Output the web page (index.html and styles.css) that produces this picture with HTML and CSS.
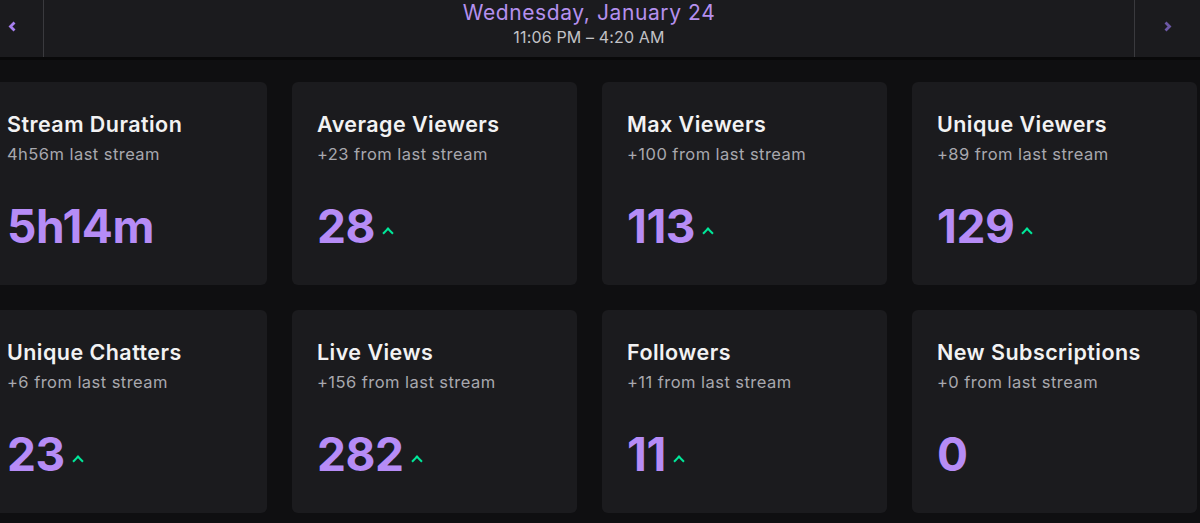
FILE: index.html
```html
<!DOCTYPE html>
<html lang="en">
<head>
    <meta charset="utf-8">
    <title>Stream Summary</title>
    <link rel="stylesheet" href="styles.css">
</head>
<body>
    <div class="page">
        <!-- Thanh chọn ngày -->
        <header class="day-bar">
            <button class="nav nav-prev" aria-label="Previous">
                <svg width="9" height="11" viewBox="0 0 9 11"><polyline points="6.5,1.5 2.5,5.5 6.5,9.5" fill="none" stroke="currentColor" stroke-width="2.8"/></svg>
            </button>
            <div class="day-info">
                <div class="day-title">Wednesday, January 24</div>
                <div class="day-time">11:06 PM – 4:20 AM</div>
            </div>
            <button class="nav nav-next" aria-label="Next">
                <svg width="9" height="11" viewBox="0 0 9 11"><polyline points="2.5,1.5 6.5,5.5 2.5,9.5" fill="none" stroke="currentColor" stroke-width="2.8"/></svg>
            </button>
        </header>

        <main class="stats">
            <div class="card">
                <div class="card-title">Stream Duration</div>
                <div class="card-sub">4h56m last stream</div>
                <div class="card-value">5h14m</div>
            </div>
            <div class="card">
                <div class="card-title">Average Viewers</div>
                <div class="card-sub">+23 from last stream</div>
                <div class="card-value">28 <span class="up"></span></div>
            </div>
            <div class="card">
                <div class="card-title">Max Viewers</div>
                <div class="card-sub">+100 from last stream</div>
                <div class="card-value">113 <span class="up"></span></div>
            </div>
            <div class="card">
                <div class="card-title">Unique Viewers</div>
                <div class="card-sub">+89 from last stream</div>
                <div class="card-value">129 <span class="up"></span></div>
            </div>
            <div class="card">
                <div class="card-title">Unique Chatters</div>
                <div class="card-sub">+6 from last stream</div>
                <div class="card-value">23 <span class="up"></span></div>
            </div>
            <div class="card">
                <div class="card-title">Live Views</div>
                <div class="card-sub">+156 from last stream</div>
                <div class="card-value">282 <span class="up"></span></div>
            </div>
            <div class="card">
                <div class="card-title">Followers</div>
                <div class="card-sub">+11 from last stream</div>
                <div class="card-value">11 <span class="up"></span></div>
            </div>
            <div class="card">
                <div class="card-title">New Subscriptions</div>
                <div class="card-sub">+0 from last stream</div>
                <div class="card-value">0</div>
            </div>
        </main>
    </div>
</body>
</html>
```

FILE: styles.css
```css
body {
    margin: 0;
    background-color: #0f0f11;
    font-family: Inter, "Noto Sans", sans-serif;
    overflow: hidden;
}

.page {
    margin-left: -18px;
    width: 1218px;
}

/* Thanh ngày */
.day-bar {
    display: flex;
    height: 57px;
    background-color: #1b1b1e;
    border-bottom: 3px solid #09090a;
}

.nav {
    display: flex;
    align-items: center;
    justify-content: center;
    padding: 0;
    border: none;
    background: none;
    cursor: pointer;
}

.nav-prev {
    width: 62px;
    color: #a77ff0;
    border-right: 1px solid #3a3a3e;
}

.nav-next {
    width: 66px;
    color: #6c58a6;
    border-left: 1px solid #3a3a3e;
}

.nav svg {
    margin-top: -4px;
}

.day-info {
    flex: 1;
    text-align: center;
}

.day-title {
    color: #b590ee;
    font-size: 21px;
    line-height: 25px;
    letter-spacing: 0.6px;
}

.day-time {
    color: #c2c2c6;
    font-size: 16px;
    line-height: 24px;
    letter-spacing: 0.15px;
}

/* Lưới thẻ */
.stats {
    display: grid;
    grid-template-columns: repeat(4, 285px);
    gap: 25px;
    padding-top: 22px;
}

.card {
    background-color: #1b1b1e;
    border-radius: 6px;
    padding: 28px 25px 31px;
    height: 144px;
}

.card-title {
    color: #f2f2f3;
    font-size: 21.5px;
    font-weight: 600;
    line-height: 28px;
    letter-spacing: 0.45px;
}

.card-sub {
    color: #a8a8ae;
    font-size: 16.5px;
    line-height: 22px;
    margin-top: 5px;
    letter-spacing: 0.45px;
}

.card-value {
    display: flex;
    align-items: center;
    gap: 9px;
    color: #b68cf6;
    font-size: 46px;
    font-weight: 700;
    line-height: 56px;
    margin-top: 33px;
    letter-spacing: -0.4px;
}

.up {
    width: 6px;
    height: 6px;
    border-top: 2.5px solid #00e89a;
    border-left: 2.5px solid #00e89a;
    transform: rotate(45deg);
    margin-top: 14px;
}
```
